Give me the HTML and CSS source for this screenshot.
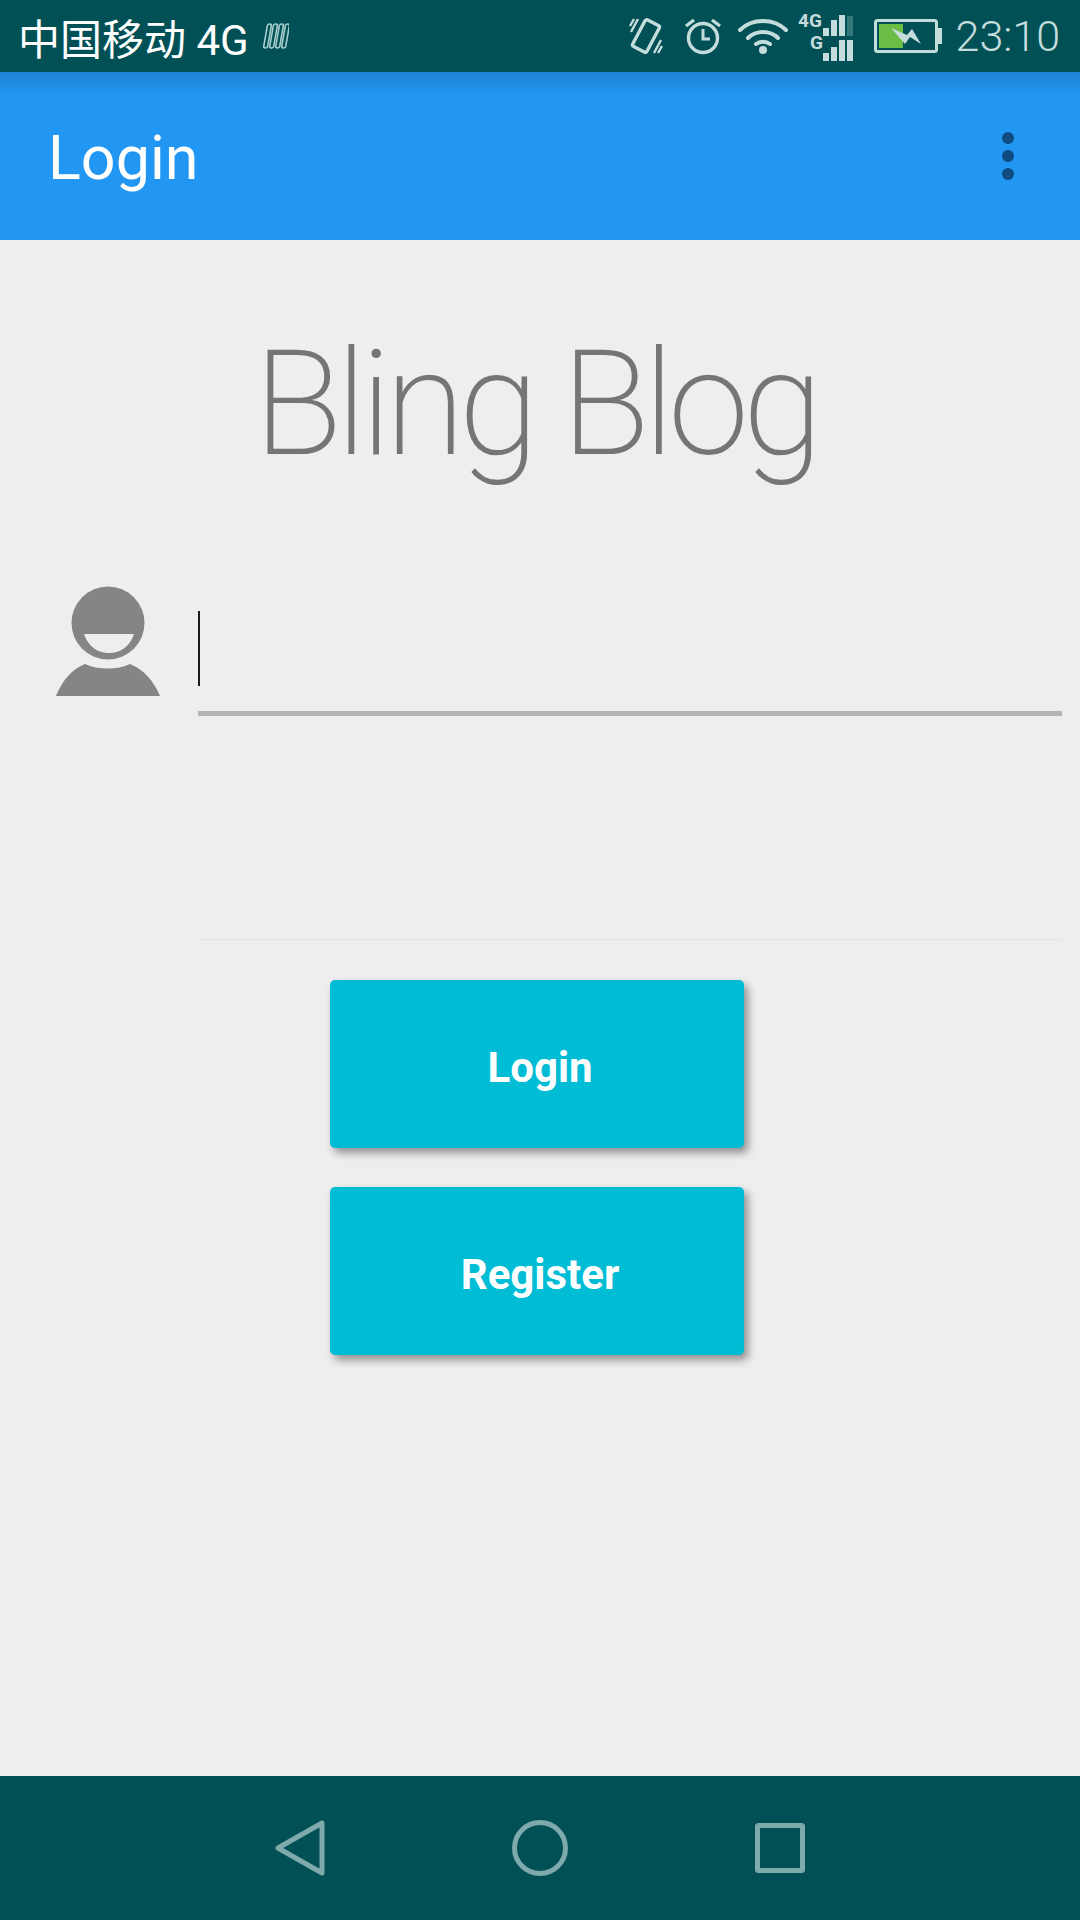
FILE: index.html
```html
<!DOCTYPE html>
<html lang="en">
<head>
  <meta charset="UTF-8">
  <title>Login</title>
  <link rel="stylesheet" href="styles.css">
</head>
<body>

  <div class="status-bar">
    <span class="carrier">中国移动 4G</span>
    <svg class="net-icon" width="28" height="28" viewBox="0 0 28 28" fill="none" stroke="#a8cfcf" stroke-width="1.6">
      <rect x="3" y="2" width="4" height="24" rx="2" transform="skewX(-10) translate(4 0)"/>
      <rect x="9" y="2" width="4" height="24" rx="2" transform="skewX(-10) translate(4 0)"/>
      <rect x="15" y="2" width="4" height="24" rx="2" transform="skewX(-10) translate(4 0)"/>
      <rect x="21" y="2" width="4" height="24" rx="2" transform="skewX(-10) translate(4 0)"/>
    </svg>

    <div class="status-icons">
      <svg class="ic-vibrate" width="36" height="40" viewBox="0 0 36 40" fill="none" stroke="#c5dcdc">
        <rect x="10" y="5" width="16" height="30" rx="2" stroke-width="3.4" transform="rotate(28 18 20)"/>
        <path d="M3 16 L10 3 M2 10 L6 3 M33 24 L26 37 M34 30 L30 37" stroke-width="2.4"/>
      </svg>
      <svg class="ic-alarm" width="38" height="38" viewBox="0 0 38 38" fill="none" stroke="#c5dcdc">
        <circle cx="19" cy="21" r="14.5" stroke-width="3.4"/>
        <path d="M19 12 V22 H26" stroke-width="3"/>
        <path d="M2 9 L10 3 M36 9 L28 3" stroke-width="3.4"/>
      </svg>
      <svg class="ic-wifi" width="50" height="38" viewBox="0 0 50 38" fill="none" stroke="#c5dcdc" stroke-linecap="round">
        <path d="M2 13 C14 1 36 1 48 13" stroke-width="4"/>
        <path d="M10 21 C18 13 32 13 40 21" stroke-width="4"/>
        <path d="M18 27 C22 24 28 24 32 27" stroke-width="4"/>
        <circle cx="25" cy="33" r="4" fill="#c5dcdc" stroke="none"/>
      </svg>
      <svg class="ic-signal" width="58" height="50" viewBox="0 0 58 50">
        <text class="sig-text" x="0" y="16">4G</text>
        <text class="sig-text" x="12" y="38">G</text>
        <g fill="#c5dcdc">
          <rect x="25" y="17" width="6" height="8"/>
          <rect x="33" y="9" width="6" height="16"/>
          <rect x="41" y="4" width="6" height="21"/>
          <rect x="25" y="42" width="6" height="8"/>
          <rect x="33" y="36" width="6" height="14"/>
          <rect x="41" y="29" width="6" height="21"/>
        </g>
        <rect x="49" y="5" width="6" height="20" fill="#33797c"/>
        <rect x="49" y="29" width="6" height="21" fill="#c5dcdc"/>
      </svg>
      <svg class="ic-battery" width="68" height="34" viewBox="0 0 68 34">
        <rect x="1.5" y="1.5" width="61" height="31" rx="2" fill="none" stroke="#c5dcdc" stroke-width="3"/>
        <rect x="5" y="5" width="24" height="24" fill="#6cbd45"/>
        <rect x="64" y="9" width="4" height="16" fill="#c5dcdc"/>
        <path d="M17 9 L33 16 L38 10 L47 25 L36 18 L31 25Z" fill="#c5dcdc"/>
      </svg>
      <span class="clock">23:10</span>
    </div>
  </div>

  <div class="toolbar">
    <h1 class="toolbar-title">Login</h1>
    <div class="overflow-menu">
      <span class="dot"></span>
      <span class="dot"></span>
      <span class="dot"></span>
    </div>
  </div>

  <div class="content">
    <h2 class="app-name">Bling Blog</h2>

    <div class="user-row">
      <svg class="user-icon" width="106" height="110" viewBox="0 0 106 110">
        <circle cx="53" cy="37" r="36.5" fill="#858585"/>
        <path d="M29 48 H79 C75 60 66 67 54 67 C42 67 33 60 29 48Z" fill="#eeeeee"/>
        <path d="M1 110 C7 95 17 83 30 78 C42 84 63 84 75 78 C88 83 99 95 105 110Z" fill="#858585"/>
      </svg>
      <div class="field field-active">
        <span class="cursor"></span>
      </div>
    </div>

    <div class="field field-password"></div>

    <div class="buttons">
      <button class="btn">Login</button>
      <button class="btn">Register</button>
    </div>
  </div>

  <div class="nav-bar">
    <svg width="50" height="56" viewBox="0 0 50 56" fill="none" stroke="#7faaac" stroke-width="5" stroke-linejoin="round">
      <path d="M3 28 L47 3 V53Z"/>
    </svg>
    <svg width="56" height="56" viewBox="0 0 56 56" fill="none" stroke="#7faaac" stroke-width="5">
      <circle cx="28" cy="28" r="25.5"/>
    </svg>
    <svg width="50" height="50" viewBox="0 0 50 50" fill="none" stroke="#7faaac" stroke-width="5" stroke-linejoin="round">
      <rect x="2.5" y="2.5" width="45" height="45" rx="1"/>
    </svg>
  </div>

</body>
</html>
```

FILE: styles.css
```css
* {
  box-sizing: border-box;
}

body {
  margin: 0;
  width: 1080px;
  height: 1920px;
  display: flex;
  flex-direction: column;
  font-family: Roboto, "Noto Sans CJK SC", sans-serif;
  background: #eeeeee;
  overflow: hidden;
}

/* status bar */
.status-bar {
  height: 72px;
  flex-shrink: 0;
  display: flex;
  align-items: center;
  padding: 0 20px 0 18px;
  background: #005056;
}

.carrier {
  color: #ffffff;
  font-size: 42px;
  font-weight: 400;
  white-space: nowrap;
}

.net-icon {
  margin-left: 12px;
}

.status-icons {
  margin-left: auto;
  display: flex;
  align-items: center;
}

.ic-vibrate {
  margin-right: 20px;
}

.ic-alarm {
  margin-right: 16px;
}

.ic-wifi {
  margin-right: 10px;
}

.ic-signal {
  margin-right: 18px;
  overflow: visible;
}

.ic-battery {
  margin-right: 14px;
}

.sig-text {
  fill: #c5dcdc;
  font-family: Roboto, sans-serif;
  font-size: 19px;
  font-weight: 700;
}

.clock {
  color: #c5dcdc;
  font-size: 43px;
  font-weight: 300;
}

/* toolbar */
.toolbar {
  height: 168px;
  flex-shrink: 0;
  display: flex;
  align-items: center;
  justify-content: space-between;
  padding: 0 66px 0 48px;
  background: linear-gradient(#1f84d2, #2196f3 24px);
}

.toolbar-title {
  margin: 4px 0 0;
  color: #ffffff;
  font-size: 61px;
  font-weight: 400;
}

.overflow-menu {
  display: flex;
  flex-direction: column;
  gap: 6px;
}

.dot {
  width: 12px;
  height: 12px;
  border-radius: 50%;
  background: #0f4a80;
}

/* main */
.content {
  flex: 1;
  display: flex;
  flex-direction: column;
}

.app-name {
  margin: 65px 0 0;
  height: 281px;
  padding-right: 10px;
  color: #757575;
  font-size: 146px;
  font-weight: 200;
  line-height: 200px;
  letter-spacing: -6.5px;
  text-align: center;
  white-space: nowrap;
}

.user-row {
  display: flex;
  align-items: flex-start;
  padding-left: 55px;
}

.user-icon {
  flex-shrink: 0;
}

.field {
  margin-right: 18px;
}

.field-active {
  flex: 1;
  height: 130px;
  margin-left: 37px;
  padding-top: 25px;
  border-bottom: 5px solid #b3b3b3;
}

.cursor {
  display: block;
  width: 2px;
  height: 75px;
  background: #1a1a1a;
}

.field-password {
  height: 224px;
  margin-left: 198px;
  border-bottom: 1px solid #e3e3e3;
}

.buttons {
  display: flex;
  flex-direction: column;
  gap: 39px;
  margin: 40px 0 0 330px;
}

.btn {
  width: 414px;
  height: 168px;
  padding: 6px 0 0 6px;
  border: none;
  border-radius: 5px;
  background: #00bcd4;
  color: #ffffff;
  font-family: Roboto, sans-serif;
  font-size: 42px;
  font-weight: 700;
  box-shadow: 4px 5px 8px rgba(0, 0, 0, 0.4);
  cursor: pointer;
}

/* navigation */
.nav-bar {
  height: 144px;
  flex-shrink: 0;
  display: flex;
  align-items: center;
  justify-content: center;
  gap: 187px;
  background: #005056;
}
```
